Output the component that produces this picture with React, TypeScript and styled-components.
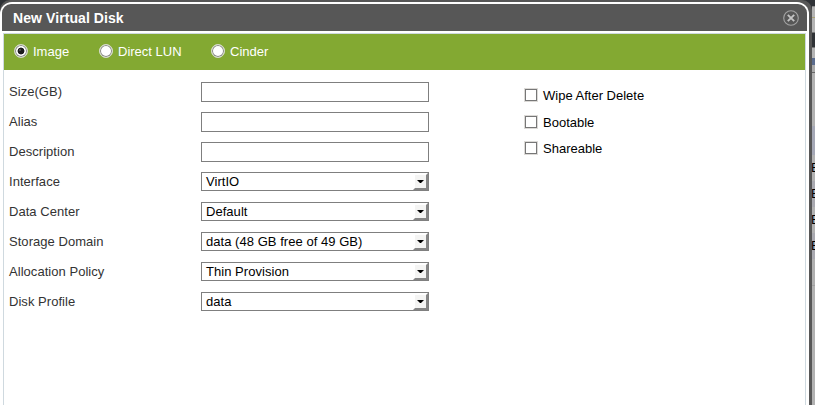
import React, { useState } from 'react';
import styled, { createGlobalStyle } from 'styled-components';

const GlobalStyle = createGlobalStyle`
  * { box-sizing: border-box; }
  body {
    margin: 0;
    overflow: hidden;
    background: #fff;
    font: 13px/15px "Liberation Sans", Arial, sans-serif;
    color: #333;
  }
`;

const Screen = styled.div`
  display: flex;
  width: 815px;
  height: 405px;
  background: #2f3236;
`;

const Frame = styled.div`
  width: 812px;
  height: 405px;
  padding: 2px 3px 0 0;
  background: #575757;
  border-radius: 10px 10px 0 0;
`;

const Dialog = styled.section`
  height: 403px;
  padding: 2px 2px 0;
  background: #fff;
  border-radius: 12px 12px 0 0;
`;

const TitleBar = styled.header`
  display: flex;
  align-items: center;
  justify-content: space-between;
  height: 27px;
  padding: 0 8px 0 11px;
  background: #575757;
  border-radius: 9px 9px 0 0;
`;

const Title = styled.h1`
  margin: 0;
  font-size: 14px;
  line-height: 16px;
  font-weight: bold;
  letter-spacing: 0.08px;
  color: #fff;
`;

const CloseButton = styled.button`
  display: flex;
  padding: 0;
  border: 0;
  background: none;
`;

const Content = styled.div`
  height: 372px;
  margin: 2px 1px 0;
  border: 1px solid #cfd9df;
  border-bottom: 0;
`;

const TypeBar = styled.div`
  display: flex;
  height: 36px;
  padding: 10px 0 0 10px;
  background: #83a932;
`;

const TypeOption = styled.label<{ $width: number }>`
  display: flex;
  align-items: flex-start;
  width: ${(p) => p.$width}px;
  height: 15px;
  gap: 5px;
  color: #fff;
`;

const Radio = styled.input`
  appearance: none;
  flex: none;
  width: 14px;
  height: 14px;
  margin: 0;
  border: 1px solid #d5dbc9;
  border-radius: 50%;
  background: #fff;
  box-shadow: inset 0 0 0 1px #85877f;
  &:checked {
    background:
      radial-gradient(circle at 5px 5px, #777 0, transparent 1.4px),
      radial-gradient(circle at 6px 6px, #1b1b1b 0, #1b1b1b 3px, #fff 3.8px);
  }
`;

const Form = styled.div`
  display: grid;
  grid-template-columns: 515px 1fr;
  padding: 12px 0 0 5px;
`;

const Fields = styled.div`
  display: grid;
  grid-auto-rows: 30px;
`;

const Field = styled.div`
  display: grid;
  grid-template-columns: 192px 228px;
  align-items: start;
`;

const FieldLabel = styled.label`
  padding-top: 2px;
  letter-spacing: 0.04px;
`;

const TextInput = styled.input`
  width: 228px;
  height: 20px;
  padding: 1px 4px;
  border: 1px solid #7f7f7f;
  border-radius: 0;
  background: #fff;
  font: inherit;
`;

const SelectBox = styled.div`
  display: flex;
  justify-content: space-between;
  width: 228px;
  height: 19px;
  border: 1px solid #7f7f7f;
  color: #000;
`;

const SelectValue = styled.span`
  padding: 1px 0 0 4px;
  letter-spacing: 0.04px;
`;

const ArrowButton = styled.span`
  display: flex;
  align-items: center;
  justify-content: center;
  width: 15px;
  height: 17px;
  border: solid;
  border-width: 2px;
  border-color: #fff #858585 #858585 #fff;
  background: #f4f4f3;
`;

const Checks = styled.div`
  display: flex;
  flex-direction: column;
  gap: 11.5px;
  padding-top: 6px;
`;

const Check = styled.label`
  display: flex;
  height: 15px;
  gap: 5px;
  color: #000;
`;

const Checkbox = styled.input`
  appearance: none;
  flex: none;
  width: 14px;
  height: 14px;
  margin: 0;
  border: 1px solid #dcdad7;
  background: #fff;
  box-shadow: inset 0 0 0 1px #777;
`;

const Backdrop = styled.aside`
  display: flex;
  flex-direction: column;
  width: 3px;
  overflow: hidden;
  background: #b2b2b2;
`;

const Band = styled.div<{ $height: number; $color: string }>`
  flex: none;
  height: ${(p) => p.$height}px;
  overflow: hidden;
  background: ${(p) => p.$color};
  color: #000;
  line-height: 26px;
  text-indent: -1px;
`;

const types = [
  { name: 'Image', width: 85 },
  { name: 'Direct LUN', width: 112 },
  { name: 'Cinder', width: 80 },
];

const textFields = ['Size(GB)', 'Alias', 'Description'];

const selects = [
  ['Interface', 'VirtIO'],
  ['Data Center', 'Default'],
  ['Storage Domain', 'data (48 GB free of 49 GB)'],
  ['Allocation Policy', 'Thin Provision'],
  ['Disk Profile', 'data'],
];

const bands: { height: number; color: string; text?: string }[] = [
  { height: 6, color: '#2f3236' },
  { height: 1, color: '#8b8b8b' },
  { height: 10, color: '#b4b4b4' },
  { height: 1, color: '#aaa276' },
  { height: 14, color: '#b4b4b4' },
  { height: 1, color: '#777' },
  { height: 14, color: '#2f3236' },
  { height: 1, color: '#777' },
  { height: 10, color: '#b4b4b4' },
  { height: 7, color: '#5a6b8d' },
  { height: 7, color: '#aaa' },
  { height: 1, color: '#666' },
  { height: 53, color: '#b2b2b2' },
  { height: 29, color: '#a5a8b6' },
  { height: 26, color: '#b2b2b2', text: 'E' },
  { height: 26, color: '#a9a9b0', text: 'E' },
  { height: 26, color: '#b2b2b2', text: 'E' },
  { height: 26, color: '#a9a9b0', text: 'E' },
  { height: 26, color: '#b0b0b0' },
  { height: 1, color: '#a0a0a0' },
];

export default function App() {
  const [type, setType] = useState('Image');

  return (
    <>
      <GlobalStyle />
      <Screen>
        <Frame>
          <Dialog>
            <TitleBar>
              <Title>New Virtual Disk</Title>
              <CloseButton aria-label="Close">
                <svg width="16" height="16" viewBox="0 0 16 16" fill="none">
                  <circle cx="8" cy="8" r="7.3" stroke="#a3a3a3" strokeWidth="1.1" />
                  <path d="M4.8 4.8 11.2 11.2M11.2 4.8 4.8 11.2" stroke="#c4c4c4" strokeWidth="1.9" />
                </svg>
              </CloseButton>
            </TitleBar>
            <Content>
              <TypeBar>
                {types.map((t) => (
                  <TypeOption key={t.name} $width={t.width}>
                    <Radio type="radio" name="type" checked={type === t.name} onChange={() => setType(t.name)} />
                    {t.name}
                  </TypeOption>
                ))}
              </TypeBar>
              <Form>
                <Fields>
                  {textFields.map((name) => (
                    <Field key={name}>
                      <FieldLabel>{name}</FieldLabel>
                      <TextInput aria-label={name} />
                    </Field>
                  ))}
                  {selects.map(([name, value]) => (
                    <Field key={name}>
                      <FieldLabel>{name}</FieldLabel>
                      <SelectBox>
                        <SelectValue>{value}</SelectValue>
                        <ArrowButton>
                          <svg width="7" height="3" viewBox="0 0 7 3">
                            <path d="M0 0H7L4 3H3Z" fill="#000" />
                          </svg>
                        </ArrowButton>
                      </SelectBox>
                    </Field>
                  ))}
                </Fields>
                <Checks>
                  {['Wipe After Delete', 'Bootable', 'Shareable'].map((name) => (
                    <Check key={name}>
                      <Checkbox type="checkbox" />
                      {name}
                    </Check>
                  ))}
                </Checks>
              </Form>
            </Content>
          </Dialog>
        </Frame>
        <Backdrop>
          {bands.map((b, i) => (
            <Band key={i} $height={b.height} $color={b.color}>
              {b.text}
            </Band>
          ))}
        </Backdrop>
      </Screen>
    </>
  );
}
